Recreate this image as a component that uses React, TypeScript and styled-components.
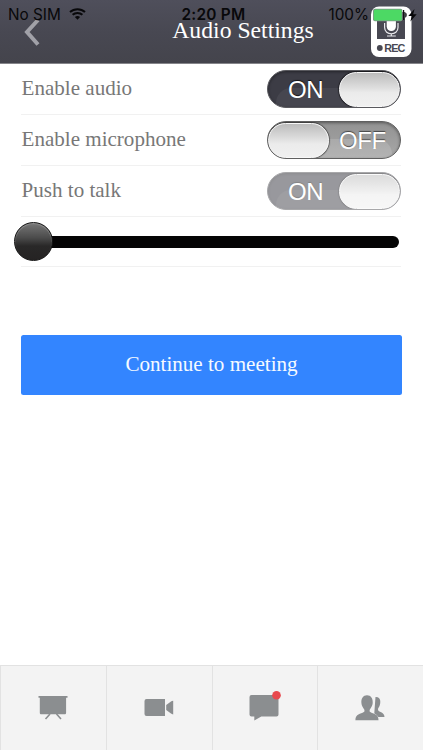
import React from 'react';
import styled, { createGlobalStyle } from 'styled-components';

const GlobalStyle = createGlobalStyle`
  * { box-sizing: border-box; }
  body { margin: 0; background: #fff; }
`;

const Screen = styled.div`
  width: 423px;
  height: 750px;
  display: flex;
  flex-direction: column;
  overflow: hidden;
  background: #fff;
  font-family: 'Liberation Serif', 'Times New Roman', serif;
`;

const Header = styled.header`
  position: relative;
  flex: none;
  height: 64px;
  display: grid;
  grid-template-columns: 63px 1fr 63px;
  background: linear-gradient(#4f4f5b, #484852 50%, #44444c);
  border-bottom: 1px solid #85858a;
`;

const BackIcon = styled.svg`
  display: block;
  margin: 17px 0 0 23px;
`;

const Title = styled.h1`
  margin: 17px 0 0 -3px;
  font-size: 23.7px;
  line-height: 27px;
  font-weight: 400;
  text-align: center;
  white-space: nowrap;
  color: #fff;
  text-indent: 66px;
`;

const RecIcon = styled.svg`
  display: block;
  margin: 6px 0 0 10px;
`;

const StatusBar = styled.div`
  position: absolute;
  inset: 0 0 auto 0;
  height: 28px;
  display: grid;
  grid-template-columns: 1fr 80px 1fr;
  align-items: center;
  font-family: Inter, sans-serif;
  font-size: 15.3px;
  line-height: 28px;
  color: #08080a;
`;

const StatusText = styled.span`
  padding-top: 1px;
`;

const Carrier = styled.div`
  display: flex;
  align-items: center;
  gap: 8px;
  padding-left: 8px;
`;

const Time = styled.div`
  font-weight: 600;
  font-size: 15.4px;
  letter-spacing: 0.25px;
  text-align: center;
  white-space: nowrap;
  padding: 1px 0 0 4px;
`;

const Power = styled.div`
  display: flex;
  align-items: center;
  justify-content: flex-end;
  gap: 3px;
  padding-right: 6px;
`;

const Settings = styled.main`
  flex: 1;
  padding: 0 22px 0 21px;
`;

const Row = styled.div<{ $h?: number }>`
  height: ${p => p.$h ?? 51}px;
  display: flex;
  justify-content: space-between;
  border-bottom: 1px solid #f1f1f1;
`;

const Label = styled.span`
  padding: 12px 0 0 0.6px;
  font-size: 21.05px;
  line-height: 24px;
  color: #777;
`;

const Switch = styled.div<{ $on: boolean; $disabled?: boolean }>`
  position: relative;
  width: 134px;
  height: 38px;
  margin: 6px 0 0;
  display: flex;
  flex-direction: ${p => (p.$on ? 'row' : 'row-reverse')};
  align-items: center;
  overflow: hidden;
  border: 1.5px solid ${p => (p.$on ? '#59595e' : '#606060')};
  border-radius: 19px;
  background: ${p => (p.$on ? '#3c3c45' : 'linear-gradient(#929292, #a8a8a8)')};
  box-shadow: inset 0 1px 3px rgba(0, 0, 0, 0.4);
  opacity: ${p => (p.$disabled ? 0.52 : 1)};

  &::before {
    content: '';
    position: absolute;
    left: 8px;
    right: 8px;
    top: 17px;
    height: 30px;
    border-radius: 15px;
    background: rgba(255, 255, 255, ${p => (p.$on ? 0.055 : 0.14)});
  }
`;

const SwitchText = styled.span<{ $on: boolean }>`
  position: relative;
  flex: 1;
  padding-top: 2px;
  padding-left: ${p => (p.$on ? 4 : 0)}px;
  padding-right: ${p => (p.$on ? 0 : 4)}px;
  font-family: 'Liberation Sans', Arial, sans-serif;
  font-size: 24px;
  line-height: 36px;
  letter-spacing: ${p => (p.$on ? -0.5 : -0.4)}px;
  text-align: center;
  color: #fff;
  text-shadow: 0 -1px 1px rgba(0, 0, 0, ${p => (p.$on ? 0.7 : 0.55)});
`;

const Knob = styled.span`
  position: relative;
  flex: none;
  width: 61px;
  height: 35px;
  border-radius: 17.5px;
  border: 1px solid #f8f8f8;
  background: linear-gradient(#bcbcbc, #dedede 45%, #ebebeb 60%, #f0f0f0);
  box-shadow: 0 0 1px 1px rgba(0, 0, 0, 0.45);
`;

const Slider = styled.div`
  width: 385px;
  height: 39px;
  margin: 5px 0 0 -7px;
  flex: none;
  display: flex;
  align-items: center;
`;

const Thumb = styled.div`
  position: relative;
  z-index: 1;
  flex: none;
  width: 39px;
  height: 39px;
  border-radius: 50%;
  border: 1px solid #151515;
  background: linear-gradient(#777, #4b4b4b 40%, #292828 62%, #252323);
  box-shadow: inset 0 1px 1px #909090;
`;

const Track = styled.div`
  flex: 1;
  height: 12px;
  margin-left: -4px;
  border-radius: 0 6px 6px 0;
  background: #050405;
`;

const Continue = styled.button`
  display: block;
  width: 381px;
  height: 60px;
  margin: 68px 0 0;
  padding: 0 0 1px;
  border: 0;
  border-radius: 2.5px;
  background: #3385ff;
  color: #f6faff;
  font: 21.1px 'Liberation Serif', serif;
`;

const TabBar = styled.nav`
  flex: none;
  height: 85px;
  display: grid;
  grid-template-columns: repeat(4, 1fr);
  background: #f3f3f3;
  border-top: 1px solid #e2e2e2;
`;

const Tab = styled.div`
  display: flex;
  justify-content: center;
  padding-top: 20px;
  border-left: 1px solid #e2e2e2;
`;

const TabIcon = styled.svg`
  width: 40px;
  height: 40px;
  margin-left: -1px;
  fill: #8b8e90;
`;

const Wifi = () => (
  <svg width="17" height="13" viewBox="0 0 17 13" fill="none" stroke="#08080a" strokeWidth="2">
    <path d="M1 4.1C5.2.2 11.8.2 16 4.1M3.6 6.8c2.7-2.5 7.1-2.5 9.8 0" />
    <path d="M8.5 11.7 5.9 9c1.5-1.3 3.7-1.3 5.2 0z" fill="#08080a" stroke="none" />
  </svg>
);

const Battery = () => (
  <svg width="45" height="18" viewBox="0 0 45 18">
    <path d="M31 4h1.200v10H31zM33.200 6.300c2 .6 2 4.800 0 5.400z" fill="#111" />
    <rect x="1" y="2.800" width="29.500" height="12.400" rx="2" fill="#80958a" />
    <rect x="1.800" y="3.500" width="28" height="11" rx="1.500" fill="#4cd964" />
    <path d="m42.500 3-6.200 7h3.400l-1.300 5.400 6.300-7.200h-3.500z" fill="#08080a" />
  </svg>
);

const Rec = () => (
  <RecIcon width="42" height="52" viewBox="0 0 42 52">
    <rect x="1" y=".5" width="40.5" height="50.5" rx="8" fill="#fff" />
    <path d="M7 6h28v27H7z" fill="#484852" />
    <rect x="16.7" y="7" width="9.2" height="18" rx="4.5" fill="#fff" />
    <path d="M14.6 17v4.500c0 8.300 13.400 8.300 13.400 0V17M21.300 27.500v2.500M17 30h8.800" fill="none" stroke="#e8e8ec" strokeWidth="1.2" />
    <circle cx="9.800" cy="42" r="2.900" fill="#484852" />
    <text x="14.300" y="46" fontFamily="Liberation Sans, sans-serif" fontWeight="700" fontSize="10.8" textLength="21" fill="#484852">REC</text>
  </RecIcon>
);

interface SettingProps {
  label: string;
  on: boolean;
  disabled?: boolean;
}

const Setting = ({ label, on, disabled }: SettingProps) => (
  <Row>
    <Label>{label}</Label>
    <Switch role="switch" aria-checked={on} $on={on} $disabled={disabled}>
      <SwitchText $on={on}>{on ? 'ON' : 'OFF'}</SwitchText>
      <Knob />
    </Switch>
  </Row>
);

export default function App() {
  return (
    <Screen>
      <GlobalStyle />
      <Header>
        <BackIcon width="20" height="30" viewBox="0 0 20 30" fill="none" stroke="#a1a1a8" strokeWidth="4">
          <path d="M15 3 4 15l11 12.5" />
        </BackIcon>
        <Title>Audio Settings</Title>
        <Rec />
        <StatusBar>
          <Carrier><StatusText>No SIM</StatusText><Wifi /></Carrier>
          <Time>2:20 PM</Time>
          <Power><StatusText>100%</StatusText><Battery /></Power>
        </StatusBar>
      </Header>
      <Settings>
        <Setting label="Enable audio" on />
        <Setting label="Enable microphone" on={false} />
        <Setting label="Push to talk" on disabled />
        <Row $h={50}>
          <Slider><Thumb /><Track /></Slider>
        </Row>
        <Continue>Continue to meeting</Continue>
      </Settings>
      <TabBar>
        <Tab>
          <TabIcon viewBox="0 0 40 40">
            <path d="M5.500 10h29v1.800h-1.400v14.900c0 1-.6 1.600-1.600 1.600H8.400c-1 0-1.600-.6-1.600-1.600V11.800H5.500z" />
            <path d="m17 28-4.500 5M23.500 28l4.500 5" stroke="#8b8e90" strokeWidth="1.600" />
          </TabIcon>
        </Tab>
        <Tab>
          <TabIcon viewBox="0 0 40 40">
            <path d="M7.500 13H26v17H7.500a2 2 0 0 1-2-2V15a2 2 0 0 1 2-2zM27.200 19l4.800-3.500c.6-.5 1.300-.8 2.200-.8v13.700c-.9 0-1.600-.3-2.200-.8L27.200 24z" />
          </TabIcon>
        </Tab>
        <Tab>
          <TabIcon viewBox="0 0 40 40">
            <path d="M7.500 9h25a2 2 0 0 1 2 2v17.400a2 2 0 0 1-2 2H17.300l-7 4v-4H7.500a2 2 0 0 1-2-2V11a2 2 0 0 1 2-2z" />
            <circle cx="32.500" cy="9.200" r="4.300" fill="#e8494e" />
          </TabIcon>
        </Tab>
        <Tab>
          <TabIcon viewBox="0 0 40 40">
            <path d="M25.500 11c5.500-.5 5.500 5.500 4 9-.6 1.500-1.500 2-1.500 3.500 0 3 6.500 2 6.500 7.500H24z" />
            <path d="M17 9.300c4 0 6 3.200 5.700 7.700-.2 3-1.600 4.500-2.700 6.200-.6 1-.5 2.400.3 2.900 3 1.900 8.200 1.900 8.200 8.100H5.400c0-6.200 5.400-6.200 8.400-8.100.8-.5.900-1.900.3-2.900-1.100-1.700-2.500-3.200-2.700-6.200-.3-4.500 1.700-7.700 5.600-7.700z" stroke="#f3f3f3" strokeWidth="1" paintOrder="stroke" />
          </TabIcon>
        </Tab>
      </TabBar>
    </Screen>
  );
}
